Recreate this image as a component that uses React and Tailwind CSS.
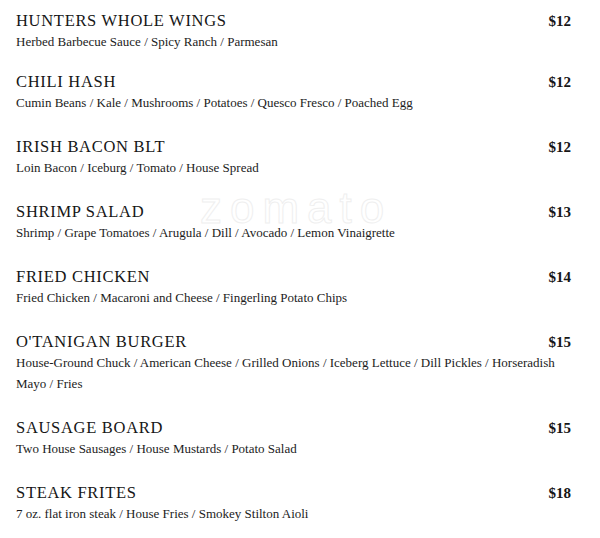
const items = [
  { name: "HUNTERS WHOLE WINGS", price: "$12", desc: "Herbed Barbecue Sauce / Spicy Ranch / Parmesan" },
  { name: "CHILI HASH", price: "$12", desc: "Cumin Beans / Kale / Mushrooms / Potatoes / Quesco Fresco / Poached Egg" },
  { name: "IRISH BACON BLT", price: "$12", desc: "Loin Bacon / Iceburg / Tomato / House Spread" },
  { name: "SHRIMP SALAD", price: "$13", desc: "Shrimp / Grape Tomatoes / Arugula / Dill / Avocado / Lemon Vinaigrette" },
  { name: "FRIED CHICKEN", price: "$14", desc: "Fried Chicken / Macaroni and Cheese / Fingerling Potato Chips" },
  {
    name: "O'TANIGAN BURGER",
    price: "$15",
    desc: "House-Ground Chuck / American Cheese / Grilled Onions / Iceberg Lettuce / Dill Pickles / Horseradish Mayo / Fries",
  },
  { name: "SAUSAGE BOARD", price: "$15", desc: "Two House Sausages / House Mustards / Potato Salad" },
  { name: "STEAK FRITES", price: "$18", desc: "7 oz. flat iron steak / House Fries / Smokey Stilton Aioli" },
];

export default function App() {
  return (
    <div className="relative w-[600px] h-[538px] overflow-hidden bg-white font-['Liberation_Serif',serif] text-[#161616]">
      {/* watermark */}
      <div className="absolute left-[200px] top-[186px] text-[44px] leading-none tracking-[8px] text-transparent [-webkit-text-stroke:1px_#efefef] font-['Liberation_Sans',sans-serif] select-none">
        zomato
      </div>
      <div className="relative flex flex-col gap-6 pl-4 pr-[29px] pt-[11px]">
        {items.map((item, i) => (
          <div key={item.name} className={i === 0 ? "flex flex-col -mb-1" : "flex flex-col"}>
            <div className="flex items-baseline justify-between h-[20px]">
              <h2 className="text-[16.5px] leading-[20px] tracking-[0.7px]">{item.name}</h2>
              <span className="text-[15px] leading-[20px] font-bold">{item.price}</span>
            </div>
            <p className="text-[13px] leading-[21px] text-[#1c1c1c]">{item.desc}</p>
          </div>
        ))}
      </div>
    </div>
  );
}
